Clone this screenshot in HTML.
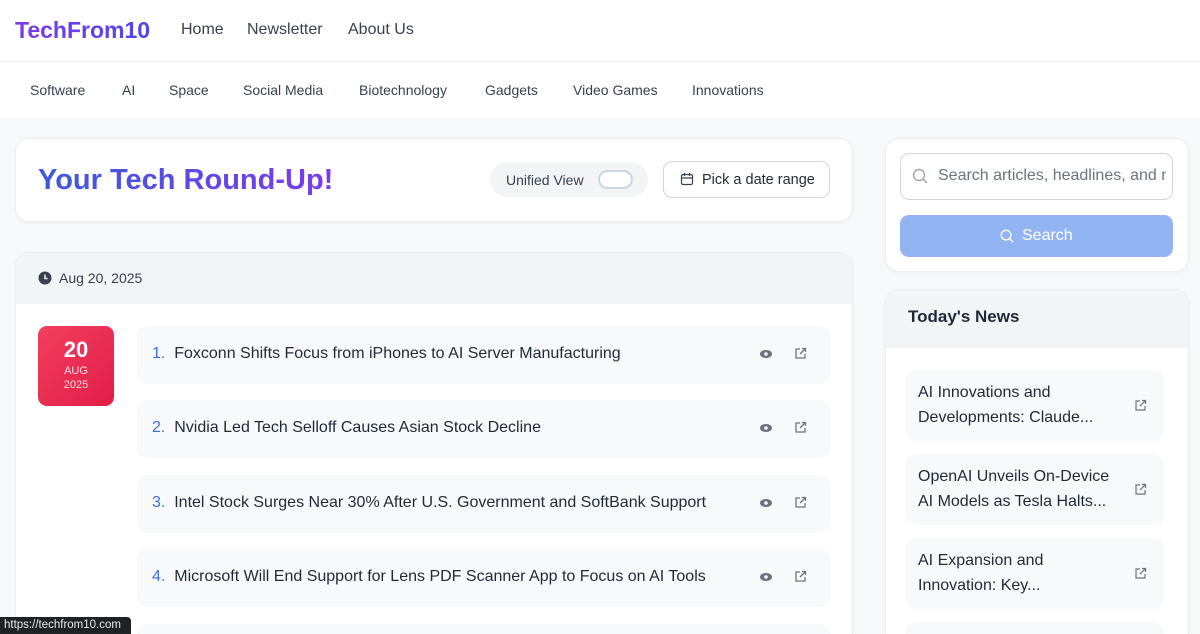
<!DOCTYPE html>
<html><head><meta charset="utf-8"><style>
*{box-sizing:border-box;margin:0;padding:0}
html,body{width:1200px;height:634px;overflow:hidden}
body{background:#f7f8fa;font-family:"Liberation Sans",sans-serif;color:#1f2937;position:relative}
.abs{position:absolute}
.hdr{left:0;top:0;width:1200px;height:62px;background:#fff;border-bottom:1px solid #eceef1}
.logo{left:15px;top:17px;font-size:23px;font-weight:bold;background:linear-gradient(90deg,#7c3aed,#4f46e5);-webkit-background-clip:text;color:transparent}
.nav{top:21px;font-size:16px;color:#374151}
.cat{left:0;top:62px;width:1200px;height:56px;background:#fff}
.c{top:82px;font-size:14px;color:#374151}
.card{background:#fff;border:1px solid #eceef1;border-radius:14px;box-shadow:0 1px 3px rgba(0,0,0,.04)}
.cardb{border-bottom:none;border-bottom-left-radius:0;border-bottom-right-radius:0}
.title{left:38px;top:164px;font-size:29px;font-weight:bold;background:linear-gradient(90deg,#3b5bdb,#7c3aed);-webkit-background-clip:text;color:transparent}
.item{left:137px;width:693px;height:58px;background:#f8f9fb;border-radius:10px;font-size:16px;color:#1f2937}
.item span.t{position:absolute;left:15px;top:19px}
.item b{color:#3b6fd6;font-weight:normal}
.ic{position:absolute;top:21px}
.side{left:906px;width:258px;height:71px;background:#f8f9fb;border-radius:10px;font-size:16px;line-height:25px;padding:10px 12px;color:#1f2937}
</style></head><body>
<div class="abs hdr"></div>
<div class="abs logo">TechFrom10</div>
<div class="abs nav" style="left:181px">Home</div>
<div class="abs nav" style="left:247px">Newsletter</div>
<div class="abs nav" style="left:348px">About Us</div>
<div class="abs cat"></div>
<div class="abs c" style="left:30px">Software</div>
<div class="abs c" style="left:122px">AI</div>
<div class="abs c" style="left:169px">Space</div>
<div class="abs c" style="left:243px">Social Media</div>
<div class="abs c" style="left:359px">Biotechnology</div>
<div class="abs c" style="left:485px">Gadgets</div>
<div class="abs c" style="left:573px">Video Games</div>
<div class="abs c" style="left:692px">Innovations</div>

<div class="abs card" style="left:15px;top:138px;width:838px;height:84px"></div>
<div class="abs title">Your Tech Round-Up!</div>
<div class="abs" style="left:490px;top:162px;width:158px;height:35px;background:#f3f4f6;border-radius:18px"></div>
<div class="abs" style="left:506px;top:172px;font-size:14px;color:#374151">Unified View</div>
<div class="abs" style="left:598px;top:170px;width:35px;height:19px;border:2px solid #cbd5e1;border-radius:10px;background:#fff"></div>
<div class="abs" style="left:663px;top:161px;width:167px;height:37px;border:1px solid #d1d5db;border-radius:9px;background:#fff"></div>
<svg class="abs" style="left:680px;top:172px" width="14" height="14" viewBox="0 0 14 14" fill="none" stroke="#374151" stroke-width="1.2"><rect x="1.5" y="2.5" width="11" height="10" rx="1.5"/><path d="M1.5 6h11M4.5 1v3M9.5 1v3"/></svg>
<div class="abs" style="left:702px;top:172px;font-size:14.5px;color:#1f2937">Pick a date range</div>

<div class="abs card cardb" style="left:15px;top:252px;width:838px;height:382px;overflow:hidden"><div style="height:51px;background:#f3f4f6"></div></div>
<svg class="abs" style="left:38px;top:271px" width="14" height="14" viewBox="0 0 14 14"><circle cx="7" cy="7" r="6.5" fill="#374151"/><path d="M7 3.5V7.5h2.5" stroke="#fff" stroke-width="1.4" fill="none"/></svg>
<div class="abs" style="left:59px;top:270px;font-size:14px;color:#374151">Aug 20, 2025</div>
<div class="abs" style="left:38px;top:326px;width:76px;height:80px;border-radius:9px;background:linear-gradient(135deg,#f43f5e,#e11d48);color:#fff;text-align:center">
<div style="font-size:22px;font-weight:bold;margin-top:11px">20</div>
<div style="font-size:11px;margin-top:2px;opacity:.85">AUG</div>
<div style="font-size:11px;margin-top:2px;opacity:.85">2025</div></div>

<div class="abs item" style="top:326px"><span class="t"><b>1.</b>&nbsp; Foxconn Shifts Focus from iPhones to AI Server Manufacturing</span><svg class="ic" style="left:622px" width="14" height="14" viewBox="0 0 14 14"><ellipse cx="7" cy="7" rx="6" ry="4" fill="#6b7280"/><circle cx="7" cy="7" r="1.8" fill="#f8f9fb"/></svg><svg class="ic" style="left:657px" width="13" height="13" viewBox="0 0 13 13" fill="none" stroke="#6b7280" stroke-width="1.3"><path d="M6 2H2v9h9V7M8 1.5h3.5V5M11.5 1.5 6 7"/></svg></div>
<div class="abs item" style="top:400px"><span class="t"><b>2.</b>&nbsp; Nvidia Led Tech Selloff Causes Asian Stock Decline</span><svg class="ic" style="left:622px" width="14" height="14" viewBox="0 0 14 14"><ellipse cx="7" cy="7" rx="6" ry="4" fill="#6b7280"/><circle cx="7" cy="7" r="1.8" fill="#f8f9fb"/></svg><svg class="ic" style="left:657px" width="13" height="13" viewBox="0 0 13 13" fill="none" stroke="#6b7280" stroke-width="1.3"><path d="M6 2H2v9h9V7M8 1.5h3.5V5M11.5 1.5 6 7"/></svg></div>
<div class="abs item" style="top:475px"><span class="t"><b>3.</b>&nbsp; Intel Stock Surges Near 30% After U.S. Government and SoftBank Support</span><svg class="ic" style="left:622px" width="14" height="14" viewBox="0 0 14 14"><ellipse cx="7" cy="7" rx="6" ry="4" fill="#6b7280"/><circle cx="7" cy="7" r="1.8" fill="#f8f9fb"/></svg><svg class="ic" style="left:657px" width="13" height="13" viewBox="0 0 13 13" fill="none" stroke="#6b7280" stroke-width="1.3"><path d="M6 2H2v9h9V7M8 1.5h3.5V5M11.5 1.5 6 7"/></svg></div>
<div class="abs item" style="top:549px"><span class="t"><b>4.</b>&nbsp; Microsoft Will End Support for Lens PDF Scanner App to Focus on AI Tools</span><svg class="ic" style="left:622px" width="14" height="14" viewBox="0 0 14 14"><ellipse cx="7" cy="7" rx="6" ry="4" fill="#6b7280"/><circle cx="7" cy="7" r="1.8" fill="#f8f9fb"/></svg><svg class="ic" style="left:657px" width="13" height="13" viewBox="0 0 13 13" fill="none" stroke="#6b7280" stroke-width="1.3"><path d="M6 2H2v9h9V7M8 1.5h3.5V5M11.5 1.5 6 7"/></svg></div>
<div class="abs item" style="top:624px;height:10px;border-bottom-left-radius:0;border-bottom-right-radius:0"></div>

<div class="abs card" style="left:885px;top:138px;width:304px;height:134px"></div>
<div class="abs" style="left:900px;top:153px;width:273px;height:47px;border:1px solid #d1d5db;border-radius:9px;background:#fff"></div>
<svg class="abs" style="left:912px;top:168px" width="16" height="16" viewBox="0 0 16 16" fill="none" stroke="#9ca3af" stroke-width="1.4"><circle cx="7" cy="7" r="5.5"/><path d="M11 11l4 4"/></svg>
<div class="abs" style="left:938px;top:167px;width:228px;overflow:hidden;white-space:nowrap;font-size:16px;color:#6b7280">Search articles, headlines, and more</div>
<div class="abs" style="left:900px;top:215px;width:273px;height:42px;border-radius:9px;background:#93b4f2"></div>
<svg class="abs" style="left:1000px;top:229px" width="14" height="14" viewBox="0 0 16 16" fill="none" stroke="#fff" stroke-width="1.5"><circle cx="7" cy="7" r="5.5"/><path d="M11 11l4 4"/></svg>
<div class="abs" style="left:1022px;top:227px;font-size:16px;color:#fff">Search</div>

<div class="abs card cardb" style="left:885px;top:289px;width:304px;height:345px;overflow:hidden"><div style="height:58px;background:#f3f4f6"></div></div>
<div class="abs" style="left:908px;top:307px;font-size:17px;font-weight:bold;color:#1f2937">Today's News</div>
<div class="abs side" style="top:370px">AI Innovations and<br>Developments: Claude...</div>
<div class="abs side" style="top:454px">OpenAI Unveils On-Device<br>AI Models as Tesla Halts...</div>
<div class="abs side" style="top:538px">AI Expansion and<br>Innovation: Key...</div>
<div class="abs side" style="top:622px;height:12px;padding:0;border-bottom-left-radius:0;border-bottom-right-radius:0"></div>
<svg class="abs" style="left:1134px;top:399px" width="13" height="13" viewBox="0 0 13 13" fill="none" stroke="#6b7280" stroke-width="1.2"><path d="M6 2H2v9h9V7M8 1.5h3.5V5M11.5 1.5 6 7"/></svg>
<svg class="abs" style="left:1134px;top:483px" width="13" height="13" viewBox="0 0 13 13" fill="none" stroke="#6b7280" stroke-width="1.2"><path d="M6 2H2v9h9V7M8 1.5h3.5V5M11.5 1.5 6 7"/></svg>
<svg class="abs" style="left:1134px;top:567px" width="13" height="13" viewBox="0 0 13 13" fill="none" stroke="#6b7280" stroke-width="1.2"><path d="M6 2H2v9h9V7M8 1.5h3.5V5M11.5 1.5 6 7"/></svg>

<div class="abs" style="left:0;top:617px;width:131px;height:17px;background:#202124;color:#e8eaed;font-size:11.5px;padding:2px 4px;border-top-right-radius:4px">https://techfrom10.com</div>
</body></html>
